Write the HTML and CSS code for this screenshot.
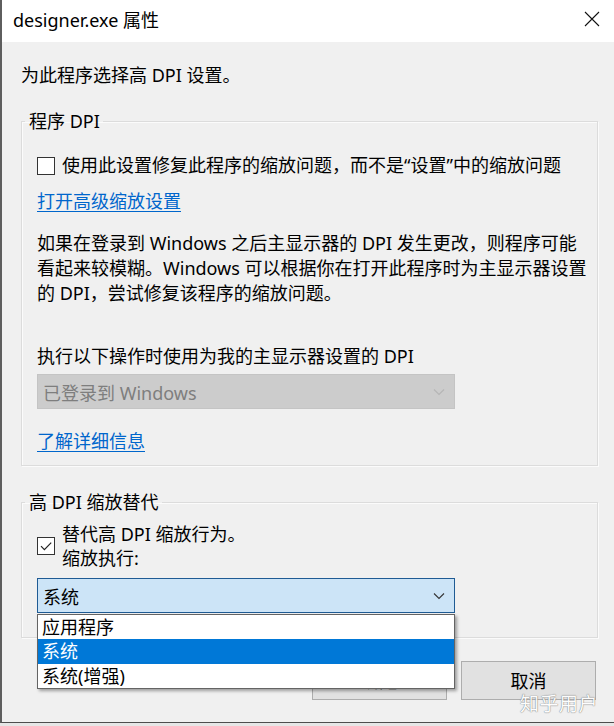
FILE: index.html
```html
<!DOCTYPE html>
<html lang="zh-CN">
<head>
<meta charset="utf-8">
<title>designer.exe 属性</title>
<link rel="stylesheet" href="styles.css">
</head>
<body>
<div class="window">
  <div class="titlebar">
    <span class="title">designer.exe 属性</span>
    <svg class="close" width="16" height="16" viewBox="0 0 16 16"><path d="M1 1L15 15M15 1L1 15" stroke="#111" stroke-width="1.1" fill="none"/></svg>
  </div>
  <div class="content">
    <p class="intro">为此程序选择高 DPI 设置。</p>

    <fieldset class="group group-dpi">
      <legend class="legend">程序 DPI</legend>
      <div class="check-row">
        <span class="checkbox"></span>
        <span class="check-label">使用此设置修复此程序的缩放问题，而不是“设置”中的缩放问题</span>
      </div>
      <a class="link link-adv">打开高级缩放设置</a>
      <p class="para">如果在登录到 Windows 之后主显示器的 DPI 发生更改，则程序可能<br>看起来较模糊。Windows 可以根据你在打开此程序时为主显示器设置<br>的 DPI，尝试修复该程序的缩放问题。</p>
      <p class="label">执行以下操作时使用为我的主显示器设置的 DPI</p>
      <div class="combo combo-disabled">
        <span>已登录到 Windows</span>
        <svg class="chev" width="12" height="8" viewBox="0 0 12 8"><path d="M1 1.5L6 6.5L11 1.5" stroke="#b5b5b5" stroke-width="1.1" fill="none"/></svg>
      </div>
      <a class="link link-more">了解详细信息</a>
    </fieldset>

    <fieldset class="group group-override">
      <legend class="legend">高 DPI 缩放替代</legend>
      <div class="check-row check-row-2">
        <span class="checkbox checked"><svg width="16" height="16" viewBox="0 0 16 16"><path d="M3 8.2L6.4 11.6L13.2 4.6" stroke="#222" stroke-width="1.2" fill="none"/></svg></span>
        <span class="check-label two-line">替代高 DPI 缩放行为。<br>缩放执行:</span>
      </div>
      <div class="combo combo-active">
        <span>系统</span>
        <svg class="chev" width="12" height="8" viewBox="0 0 12 8"><path d="M1 1.5L6 6.5L11 1.5" stroke="#333" stroke-width="1.1" fill="none"/></svg>
      </div>
    </fieldset>

    <div class="buttons">
      <button class="btn">确定</button>
      <button class="btn">取消</button>
    </div>
  </div>

  <ul class="dropdown">
    <li class="item">应用程序</li>
    <li class="item selected">系统</li>
    <li class="item">系统(增强)</li>
  </ul>

  <span class="watermark">知乎用户</span>
</div>
</body>
</html>
```

FILE: styles.css
```css
html, body {
  margin: 0;
  padding: 0;
  background: #e6e6e6;
}

body {
  font-family: "Noto Sans", "Noto Sans CJK SC", sans-serif;
  font-size: 18px;
  color: #000;
}

.window {
  position: relative;
  width: 614px;
  height: 723px;
  box-sizing: border-box;
  border-left: 2px solid #5e5e5e;
  border-bottom: 1px solid #4d4d4d;
  background: #f0f0f0;
  overflow: hidden;
}

.titlebar {
  height: 42px;
  background: #fff;
  display: flex;
  align-items: center;
  justify-content: space-between;
  padding: 0 14px 0 11px;
}

.title {
  font-size: 18px;
  line-height: 25px;
  margin-top: -2px;
}

.close {
  margin-top: -4px;
}

.content {
  padding: 0 16px 0 19px;
}

.intro {
  margin: 21px 0 0 0;
  line-height: 25px;
}

.group {
  margin: 0;
  padding: 0 15px;
  border: 1px solid #dcdcdc;
  box-shadow: inset 1px 1px 0 #fbfbfb, 1px 1px 0 #fbfbfb;
  min-width: 0;
}

.legend {
  padding: 0 3px 0 4px;
  margin-left: -12px;
  line-height: 25px;
}

.group-dpi {
  margin-top: 21px;
  padding-top: 19px;
  padding-bottom: 11px;
}

.check-row {
  display: flex;
  align-items: center;
  gap: 7px;
  line-height: 25px;
}

.checkbox {
  width: 18px;
  height: 18px;
  box-sizing: border-box;
  border: 1px solid #333;
  background: #fff;
  flex: none;
  display: flex;
  align-items: center;
  justify-content: center;
}

.check-label {
  white-space: nowrap;
}

.link {
  display: block;
  width: max-content;
  color: #0066cc;
  text-decoration: underline;
  text-underline-offset: 3px;
  line-height: 25px;
}

.link-adv {
  margin-top: 11px;
}

.para {
  margin: 17px 0 0 0;
  line-height: 25px;
  white-space: nowrap;
}

.label {
  margin: 38px 0 0 0;
  line-height: 25px;
}

.combo {
  width: 418px;
  height: 35px;
  box-sizing: border-box;
  display: flex;
  align-items: center;
  justify-content: space-between;
  padding: 0 9px 0 5px;
}

.combo-disabled {
  margin-top: 5px;
  background: #cccccc;
  border: 1px solid #c4c4c4;
  color: #7e7e7e;
}

.link-more {
  margin-top: 20px;
}

.group-override {
  margin-top: 24px;
  padding-top: 7px;
  padding-bottom: 24px;
}

.check-row-2 {
  line-height: 24px;
}

.combo-active {
  margin-top: 8px;
  background: #cce4f7;
  border: 1px solid #1f5b94;
}

.buttons {
  display: flex;
  justify-content: flex-end;
  gap: 14px;
  margin-top: 23px;
  padding-right: 2px;
}

.btn {
  width: 135px;
  height: 39px;
  background: #e1e1e1;
  border: 1px solid #adadad;
  font-family: inherit;
  font-size: 18px;
  line-height: 20px;
  color: #000;
  padding: 0;
}

.dropdown {
  position: absolute;
  left: 35px;
  top: 614px;
  width: 418px;
  height: 75px;
  box-sizing: border-box;
  margin: 0;
  padding: 0;
  list-style: none;
  background: #fff;
  border: 1px solid #646464;
  box-shadow: 2px 2px 3px rgba(0, 0, 0, 0.35);
}

.item {
  height: 24.3px;
  line-height: 24px;
  padding-left: 4px;
}

.item.selected {
  background: #0078d7;
  color: #fff;
}

.watermark {
  position: absolute;
  left: 518px;
  top: 695px;
  font-size: 19px;
  line-height: 19px;
  color: #fff;
  letter-spacing: 0.5px;
  text-shadow: 0 0 1px #777, 0 0 1px #777;
  opacity: 0.9;
}
```
